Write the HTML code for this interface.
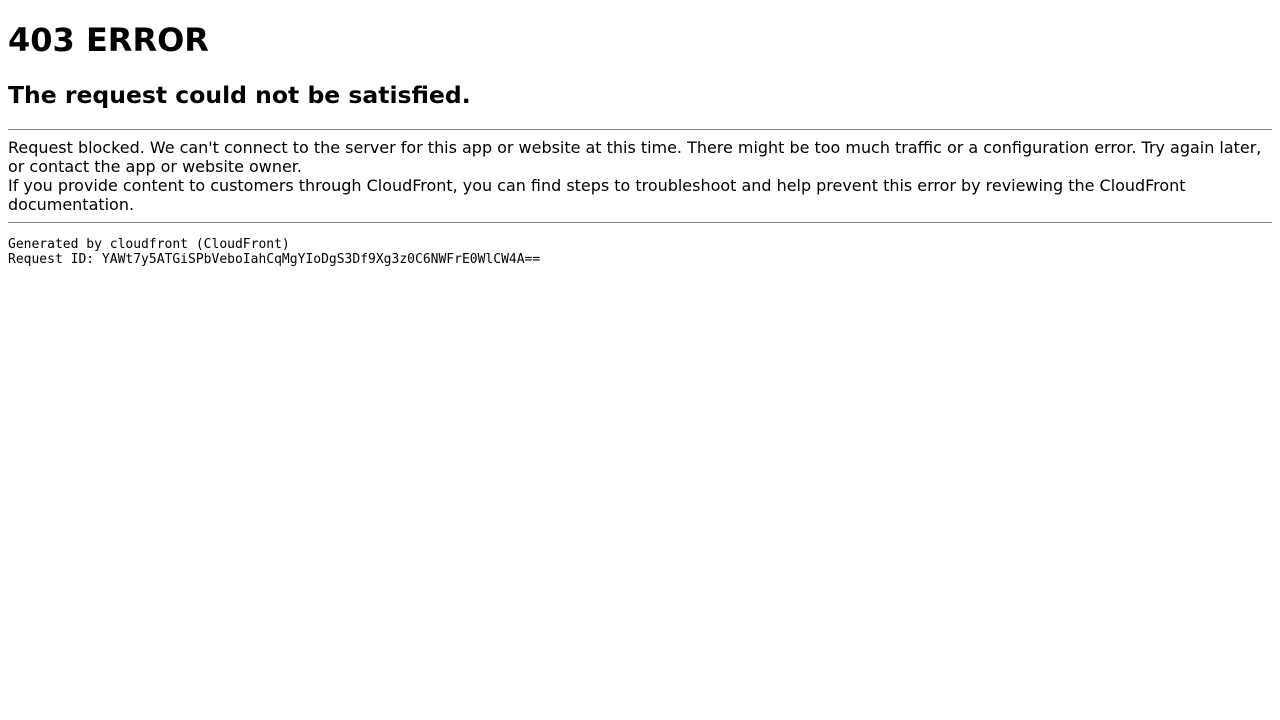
<!DOCTYPE html>
<html><head><meta charset="utf-8">
<style>
html,body{margin:0;padding:0;background:#fff;}
body{margin:8px;font-family:"DejaVu Sans",sans-serif;font-size:16px;color:#000;}
h1{font-size:32px;margin:21px 0;font-weight:bold;}
h2{font-size:23.5px;margin:21px 0 20px;padding-top:1px;font-weight:bold;}
hr{border:none;border-top:1px solid #808080;height:0;margin:8px 0;}
.t{font-size:15.98px;}
pre{font-family:"DejaVu Sans Mono",monospace;font-size:13px;margin:14px 0;}
</style></head><body>
<h1>403 ERROR</h1>
<h2>The request could not be satisfied.</h2>
<hr>
<div class="t">Request blocked. We can't connect to the server for this app or website at this time. There might be too much traffic or a configuration error. Try again later, or contact the app or website owner.
<br>
If you provide content to customers through CloudFront, you can find steps to troubleshoot and help prevent this error by reviewing the CloudFront documentation.</div>
<hr>
<pre>Generated by cloudfront (CloudFront)
Request ID: YAWt7y5ATGiSPbVeboIahCqMgYIoDgS3Df9Xg3z0C6NWFrE0WlCW4A==</pre>
</body></html>
